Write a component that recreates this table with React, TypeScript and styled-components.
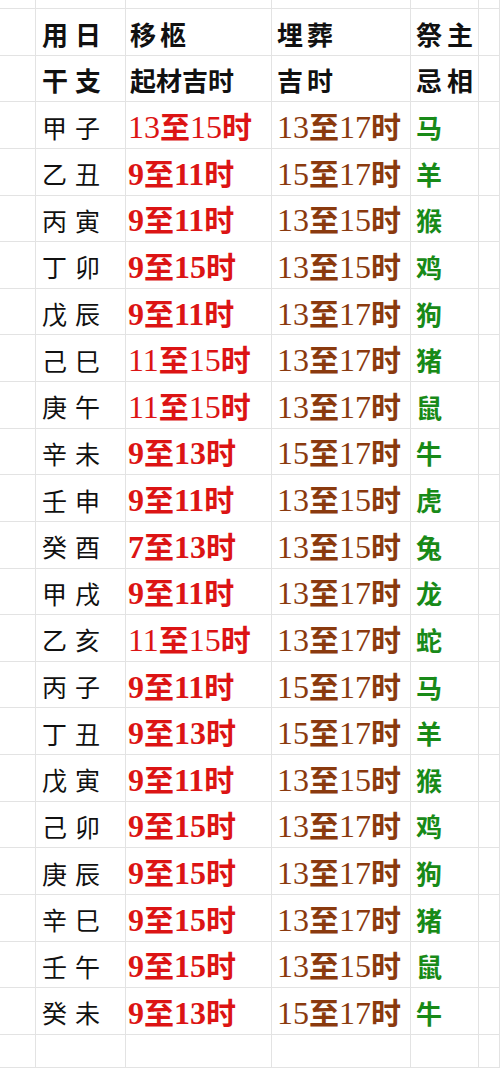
import React from "react";
import styled, { createGlobalStyle } from "styled-components";

const GlobalStyle = createGlobalStyle`
  html, body {
    margin: 0;
    padding: 0;
    background: #ffffff;
    overflow: hidden;
  }
`;

const Sheet = styled.div`
  display: grid;
  grid-template-columns: 36px 90px 146px 139px 68px 1fr;
  grid-template-rows: 9px repeat(22, 46.64px) 33px;
  width: 500px;
  height: 1068px;
  background: #ffffff;
`;

const Cell = styled.div<{ $pad?: number }>`
  box-sizing: border-box;
  border-right: 1px solid #e3e3e3;
  border-bottom: 1px solid #e3e3e3;
  display: flex;
  align-items: center;
  padding-left: ${(p) => p.$pad ?? 0}px;
  padding-top: 3px;
  white-space: nowrap;
  overflow: hidden;
`;

const HeadText = styled.span<{ $spacing: number }>`
  font-family: "Noto Sans CJK SC", "Noto Sans", sans-serif;
  font-weight: 700;
  font-size: 26px;
  color: #111111;
  letter-spacing: ${(p) => p.$spacing}px;
`;

const DayText = styled.span`
  font-family: "Noto Sans CJK SC", "Noto Sans", sans-serif;
  font-weight: 400;
  font-size: 25px;
  color: #111111;
  letter-spacing: 8px;
`;

const TimeText = styled.span<{ $color: string }>`
  color: ${(p) => p.$color};
  line-height: 1;
`;

const Digits = styled.span<{ $bold: boolean }>`
  font-family: "Liberation Serif", serif;
  font-size: 32px;
  font-weight: ${(p) => (p.$bold ? 700 : 400)};
`;

const Han = styled.span`
  font-family: "Noto Sans CJK SC", sans-serif;
  font-weight: 700;
  font-size: 30px;
`;

const AnimalText = styled.span`
  font-family: "Noto Sans CJK SC", sans-serif;
  font-weight: 700;
  font-size: 26px;
  color: #188a18;
`;

const RED = "#dc1414";
const BROWN = "#8a3a0e";

const rows = [
  ["甲子", "13至15时", "13至17时", "马"],
  ["乙丑", "9至11时", "15至17时", "羊"],
  ["丙寅", "9至11时", "13至15时", "猴"],
  ["丁卯", "9至15时", "13至15时", "鸡"],
  ["戊辰", "9至11时", "13至17时", "狗"],
  ["己巳", "11至15时", "13至17时", "猪"],
  ["庚午", "11至15时", "13至17时", "鼠"],
  ["辛未", "9至13时", "15至17时", "牛"],
  ["壬申", "9至11时", "13至15时", "虎"],
  ["癸酉", "7至13时", "13至15时", "兔"],
  ["甲戌", "9至11时", "13至17时", "龙"],
  ["乙亥", "11至15时", "13至17时", "蛇"],
  ["丙子", "9至11时", "15至17时", "马"],
  ["丁丑", "9至13时", "15至17时", "羊"],
  ["戊寅", "9至11时", "13至15时", "猴"],
  ["己卯", "9至15时", "13至17时", "鸡"],
  ["庚辰", "9至15时", "13至17时", "狗"],
  ["辛巳", "9至15时", "13至17时", "猪"],
  ["壬午", "9至15时", "13至15时", "鼠"],
  ["癸未", "9至13时", "15至17时", "牛"],
];

function Time({ text, color, bold }: { text: string; color: string; bold: boolean }) {
  const parts = text.match(/\d+|\D+/g) || [];
  return (
    <TimeText $color={color}>
      {parts.map((part, i) =>
        /\d/.test(part) ? (
          <Digits key={i} $bold={bold}>
            {part}
          </Digits>
        ) : (
          <Han key={i}>{part}</Han>
        )
      )}
    </TimeText>
  );
}

function EmptyRow() {
  return (
    <>
      {[0, 1, 2, 3, 4, 5].map((i) => (
        <Cell key={i} />
      ))}
    </>
  );
}

function App() {
  return (
    <>
      <GlobalStyle />
      <Sheet>
        <EmptyRow />

        <Cell />
        <Cell $pad={6}>
          <HeadText $spacing={7}>用日</HeadText>
        </Cell>
        <Cell $pad={4}>
          <HeadText $spacing={4}>移柩</HeadText>
        </Cell>
        <Cell $pad={5}>
          <HeadText $spacing={4}>埋葬</HeadText>
        </Cell>
        <Cell $pad={5}>
          <HeadText $spacing={5}>祭主</HeadText>
        </Cell>
        <Cell />

        <Cell />
        <Cell $pad={6}>
          <HeadText $spacing={7}>干支</HeadText>
        </Cell>
        <Cell $pad={4}>
          <HeadText $spacing={0}>起材吉时</HeadText>
        </Cell>
        <Cell $pad={5}>
          <HeadText $spacing={4}>吉时</HeadText>
        </Cell>
        <Cell $pad={5}>
          <HeadText $spacing={5}>忌相</HeadText>
        </Cell>
        <Cell />

        {rows.map((row, idx) => {
          const [day, move, bury, animal] = row;
          return (
            <React.Fragment key={idx}>
              <Cell />
              <Cell $pad={6}>
                <DayText>{day}</DayText>
              </Cell>
              <Cell $pad={2}>
                <Time text={move} color={RED} bold={!/^1\d/.test(move)} />
              </Cell>
              <Cell $pad={5}>
                <Time text={bury} color={BROWN} bold={false} />
              </Cell>
              <Cell $pad={5}>
                <AnimalText>{animal}</AnimalText>
              </Cell>
              <Cell />
            </React.Fragment>
          );
        })}

        <EmptyRow />
      </Sheet>
    </>
  );
}

export default App;
